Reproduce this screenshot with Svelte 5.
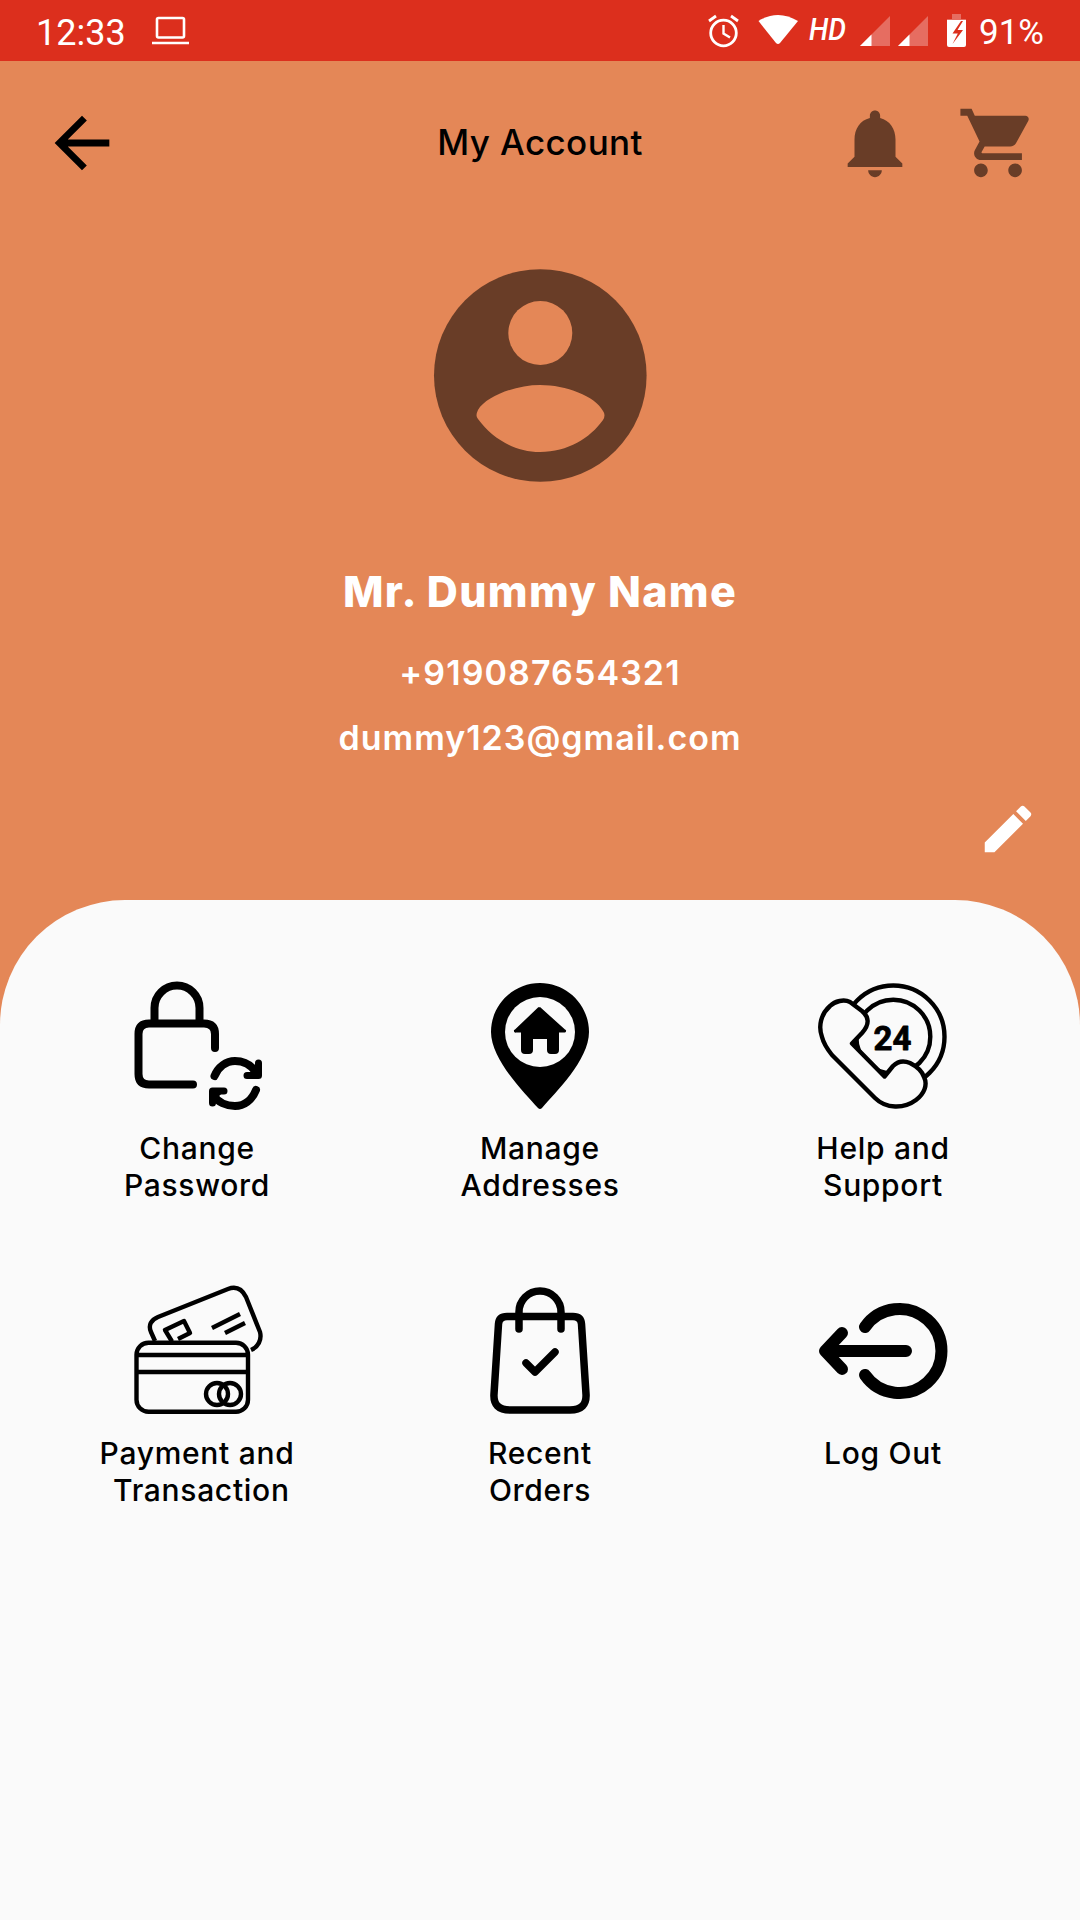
<script>
	// account screen, all static
	const name = "Mr. Dummy Name";
	const phone = "+919087654321";
	const email = "dummy123@gmail.com";
</script>

<div class="screen">
	<div class="status">
		<span class="clock">12:33</span>
		<svg class="laptop" width="39" height="61" viewBox="146 0 39 61" fill="none" stroke="#fff" stroke-width="2.6">
			<rect x="152" y="18" width="27" height="19.5" rx="1.5" />
			<path d="M147 43H184" />
		</svg>
		<svg class="status-icons" width="265" height="61" viewBox="705 0 265 61">
			<g fill="none" stroke="#fff" stroke-width="2.8">
				<circle cx="724.5" cy="33" r="12.8" />
				<path d="M724.5 25V33.5L731 37.5" stroke-width="2.4" />
				<path d="M710 21L717 16M732 16L739 21" />
			</g>
			<path d="M759.5 21Q779 9 799 21L781 43Q779 45 777 43Z" fill="#fff" />
			<text x="810" y="40" class="hd" textLength="37" lengthAdjust="spacingAndGlyphs">HD</text>
			<path d="M891 16V46H861Z" fill="#fff" fill-opacity="0.3" />
			<path d="M861 46L872.5 34.5V46Z" fill="#fff" />
			<path d="M929 16V46H899Z" fill="#fff" fill-opacity="0.3" />
			<path d="M899 46L910.5 34.5V46Z" fill="#fff" />
			<path d="M953 14H962V19H967V20H948V19H953Z" fill="#fff" fill-opacity="0.3" />
			<path d="M948 20H967V45Q967 47 965 47H950Q948 47 948 45Z" fill="#fff" />
			<path d="M962 21L953.500 33.500H958.800L953.500 44L964 30H958.500L964 21Z" fill="#dc2f1d" />
		</svg>
		<span class="percent">91%</span>
	</div>

	<div class="toolbar">
		<div class="side">
			<svg width="82" height="82" viewBox="0 0 24 24" fill="#000">
				<path d="M20 11H7.83l5.59-5.59L12 4l-8 8 8 8 1.41-1.41L7.83 13H20v-2z" />
			</svg>
		</div>
		<div class="title">My Account</div>
		<div class="side right">
			<svg width="82" height="82" viewBox="0 0 24 24" fill="#693d27">
				<path d="M12 22c1.1 0 2-.9 2-2h-4c0 1.1.89 2 2 2zm6-6v-5c0-3.07-1.64-5.64-4.5-6.32V4c0-.83-.67-1.5-1.5-1.5s-1.5.67-1.5 1.5v.68C7.63 5.36 6 7.92 6 11v5l-2 2v1h16v-1l-2-2z" />
			</svg>
			<svg width="82" height="82" viewBox="0 0 24 24" fill="#693d27">
				<path d="M7 18c-1.1 0-1.99.9-1.99 2S5.9 22 7 22s2-.9 2-2-.9-2-2-2zM1 2v2h2l3.6 7.59-1.35 2.45c-.16.28-.25.61-.25.96 0 1.1.9 2 2 2h12v-2H7.42c-.14 0-.25-.11-.25-.25l.03-.12.9-1.63h7.45c.75 0 1.41-.41 1.75-1.03l3.58-6.49c.08-.14.12-.31.12-.48 0-.55-.45-1-1-1H5.21l-.94-2H1zm16 16c-1.1 0-1.99.9-1.99 2s.89 2 1.99 2 2-.9 2-2-.9-2-2-2z" />
			</svg>
		</div>
	</div>

	<div class="profile">
		<svg class="avatar" width="240" height="230" viewBox="0 0 240 230">
			<circle cx="120.3" cy="115.5" r="106.3" fill="#693d27" />
			<circle cx="120.3" cy="73" r="32" fill="#e48757" />
			<path d="M58 159Q55 156 58 150C66 136 96 125 120 125C146 125 175 136 183 151Q186 155 183 160C170 178 148 192 120 192C94 192 72 178 58 159Z" fill="#e48757" />
		</svg>
		<div class="name">{name}</div>
		<div class="phone">{phone}</div>
		<div class="email">{email}</div>
		<div class="edit">
			<svg width="62" height="62" viewBox="0 0 24 24" fill="#fff">
				<path d="M3 17.25V21h3.75L17.81 9.94l-3.75-3.75L3 17.25zM20.71 7.04c.39-.39.39-1.02 0-1.41l-2.34-2.34c-.39-.39-1.02-.39-1.41 0l-1.83 1.83 3.75 3.75 1.83-1.83z" />
			</svg>
		</div>
	</div>

	<div class="panel">
		<div class="grid">
			<div class="item">
				<svg width="160" height="146" viewBox="17 10 160 146" fill="none" stroke="#000" stroke-width="8" stroke-linecap="round">
					<path d="M115 88V74Q115 63.5 104 63.5H49Q38.5 63.5 38.5 74V114Q38.5 124.5 49 124.5H93" />
					<path d="M54.5 63V48a22.5 22.5 0 0 1 45 0V63" stroke-linecap="butt" />
					<path d="M114.5 116C118 107 126 101 135 101C144 101 151 105 156 112" />
					<path d="M156 130C152 140 144 146 135 146C126 146 118 142 114 136" />
					<path d="M158.5 103V115.5H147" stroke-linejoin="round" fill="#000" stroke-width="7" />
					<path d="M112.5 143V131H124" stroke-linejoin="round" fill="#000" stroke-width="7" />
				</svg>
				<div class="label">Change<br />Password</div>
			</div>

			<div class="item">
				<svg width="160" height="146" viewBox="10 10 160 146">
					<path d="M90 23C117 23 139 45 139 72C139 100 105 133 92 148a3 3 0 0 1-4 0C75 133 41 100 41 72C41 45 63 23 90 23Z" fill="#000" />
					<circle cx="90" cy="72" r="35" fill="#fafafa" />
					<path d="M90 47L115 69.5a1.5 1.5 0 0 1-1 3H109V90a4 4 0 0 1-4 4H101a4 4 0 0 1-4-4V79H83V90a4 4 0 0 1-4 4H75a4 4 0 0 1-4-4V72.5H66a1.5 1.5 0 0 1-1-3L88 47.5a1.5 1.5 0 0 1 2 0Z" fill="#000" />
				</svg>
				<div class="label">Manage<br />Addresses</div>
			</div>

			<div class="item">
				<svg width="160" height="146" viewBox="3 10 160 146" fill="none" stroke="#000" stroke-width="4.4" stroke-linejoin="round" stroke-linecap="round">
					<circle cx="93.3" cy="76.7" r="51.2" />
					<circle cx="93.3" cy="76.7" r="37" />
					<!-- handset sits on top and hides the left part of both rings -->
					<path d="M52 83.5L62 73C70 64 69 57 62 51L50 42C44 39 35 41 30 46C21 54 18 66 22 77C24 85 28 90 32 95L75 138C86 149 104 149 116 140C124 134 128 125 124 117C122 111 116 106 110 103C103 100 97 102 93 106L84.5 116.5Z" fill="#fafafa" />
					<text x="92.5" y="90" class="hours" text-anchor="middle">24</text>
				</svg>
				<div class="label">Help and<br />Support</div>
			</div>

			<div class="item">
				<svg width="160" height="146" viewBox="-3 5 160 146" fill="none" stroke="#000" stroke-width="4.4" stroke-linejoin="round">
					<path d="M35 71L31 62C28 55 31 50 38 47L108 19C116 16 122 19 126 27L140 62C142 70 138 77 131 80" />
					<path d="M52 71.5L45 60L64 51L70 63L58 69" />
					<path d="M92 58L120 44M105 63L125 53" />
					<rect x="16.5" y="72.8" width="111.5" height="69" rx="12" />
					<path d="M16.5 85H128M16.5 102H128" />
					<circle cx="97" cy="124" r="11" />
					<circle cx="110" cy="124" r="11" />
				</svg>
				<div class="label">Payment and<br />&nbsp;Transaction</div>
			</div>

			<div class="item">
				<svg width="160" height="146" viewBox="-10 5 160 146" fill="none" stroke="#000" stroke-width="7.5" stroke-linecap="round" stroke-linejoin="round">
					<path d="M37 46.5H103Q111 46.5 111.5 54L116 124Q117 140 100 140H40Q23 140 24 124L28.5 54Q29 46.5 37 46.5Z" />
					<path d="M49 59V42a21 21 0 0 1 42 0V59" />
					<path d="M56 93L65 102L85 82" />
				</svg>
				<div class="label">Recent<br />Orders</div>
			</div>

			<div class="item">
				<svg width="160" height="146" viewBox="3 -5 160 146" fill="none" stroke="#000" stroke-width="12" stroke-linecap="round" stroke-linejoin="round">
					<path d="M65 47A42 42 0 1 1 65 95" />
					<path d="M42 53L25 71L42 89M27 71H106" />
				</svg>
				<div class="label">Log Out</div>
			</div>
		</div>
	</div>
</div>

<style>
	:global(body) {
		background: #e48757;
	}

	.screen {
		display: flex;
		flex-direction: column;
		min-height: 1920px;
		background: #e48757;
		font-family: Inter, "Liberation Sans", sans-serif;
	}

	.status {
		display: flex;
		align-items: center;
		height: 61px;
		padding: 0 36px;
		background: #dc2f1d;
		color: #fff;
		font-family: Roboto, sans-serif;
		font-size: 35px;
	}

	.clock, .percent {
		padding-top: 4px;
	}

	.clock {
		font-size: 36px;
	}

	.laptop {
		margin-left: 25px;
	}

	.status-icons {
		margin-left: auto;
	}

	.percent {
		margin-left: 10px;
	}

	.hd {
		fill: #fff;
		font-family: Roboto, sans-serif;
		font-size: 31px;
		font-weight: 500;
		font-style: italic;
	}

	.toolbar {
		display: flex;
		align-items: center;
		height: 164px;
		padding: 0 41px;
	}

	.side {
		flex: 1;
		display: flex;
		align-items: center;
	}

	.side.right {
		justify-content: flex-end;
		gap: 41px;
	}

	.title {
		padding-bottom: 2px;
		color: #000;
		font-size: 35px;
		font-weight: 500;
		letter-spacing: 0.4px;
	}

	.profile {
		display: flex;
		flex-direction: column;
		align-items: center;
		height: 675px;
	}

	.avatar {
		margin-top: 35px;
	}

	.name {
		margin-top: 76px;
		color: #fff;
		font-size: 43px;
		font-weight: 800;
		letter-spacing: 1.3px;
		line-height: 50px;
	}

	.phone {
		margin-top: 37px;
		color: #fff;
		font-size: 34px;
		font-weight: 600;
		letter-spacing: 1.1px;
		line-height: 40px;
	}

	.email {
		margin-top: 25px;
		color: #fff;
		font-size: 34px;
		font-weight: 600;
		letter-spacing: 1px;
		line-height: 40px;
	}

	.edit {
		align-self: flex-end;
		margin-top: 40px;
		padding-right: 41px;
	}

	.edit svg {
		display: block;
	}

	.panel {
		flex: 1;
		padding: 70px 25.5px 0;
		background: #fafafa;
		border-radius: 125px 125px 0 0;
	}

	.grid {
		display: grid;
		grid-template-columns: repeat(3, 343px);
		row-gap: 71px;
	}

	.item {
		display: flex;
		flex-direction: column;
		align-items: center;
	}

	.item svg {
		display: block;
	}

	.label {
		margin-top: 14px;
		color: #000;
		font-size: 30px;
		font-weight: 500;
		letter-spacing: 0.7px;
		line-height: 37px;
		text-align: center;
	}

	.hours {
		fill: #000;
		stroke: #000;
		stroke-width: 0.8px;
		font-family: Roboto, sans-serif;
		font-size: 33px;
		font-weight: 700;
	}
</style>
